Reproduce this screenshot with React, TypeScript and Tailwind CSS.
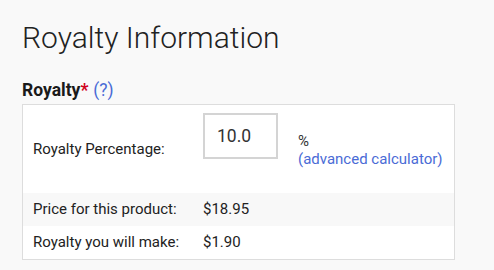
const rows = [
  { label: 'Price for this product:', value: '$18.95', shaded: true },
  { label: 'Royalty you will make:', value: '$1.90', shaded: false },
]

const App = () => {
  return (
    <div
      className="w-[494px] h-[270px] bg-[#f9f9f9] text-[#222] overflow-hidden"
      style={{ fontFamily: 'Roboto, "Liberation Sans", sans-serif' }}
    >
      <div className="pl-[22px] pt-[18px]">
        <h1 className="text-[30px] font-light leading-[40px] text-[#222]">
          Royalty Information
        </h1>
        <div className="mt-[22px] flex items-baseline text-[17.5px] leading-[20px]">
          <span className="font-bold text-[#1a1a1a]">Royalty</span>
          <span className="font-bold text-[#d0021b]">*</span>
          <a className="ml-[5px] text-[#4a6bd6]">(?)</a>
        </div>
        <div className="mt-[4px] w-[433px] border border-[#dddddd] bg-white text-[15px]">
          <div className="flex items-center h-[88px]">
            <div className="w-[180px] pl-[10px]">Royalty Percentage:</div>
            <div className="w-[75px] h-[46px] -mt-[26px] border-2 border-[#d4d4d4] bg-white flex items-center pl-[12px] text-[17.5px] text-[#333]">
              10.0
            </div>
            <div className="ml-[20px] flex flex-col leading-[18px] pt-[2px]">
              <span className="text-[#333]">%</span>
              <a className="text-[#4a6bd6]">(advanced calculator)</a>
            </div>
          </div>
          {rows.map((row) => (
            <div
              key={row.label}
              className={`flex items-center h-[33px] ${row.shaded ? 'bg-[#f8f8f8]' : 'bg-white'}`}
            >
              <div className="w-[180px] pl-[10px]">{row.label}</div>
              <div>{row.value}</div>
            </div>
          ))}
        </div>
      </div>
    </div>
  )
}

export default App
